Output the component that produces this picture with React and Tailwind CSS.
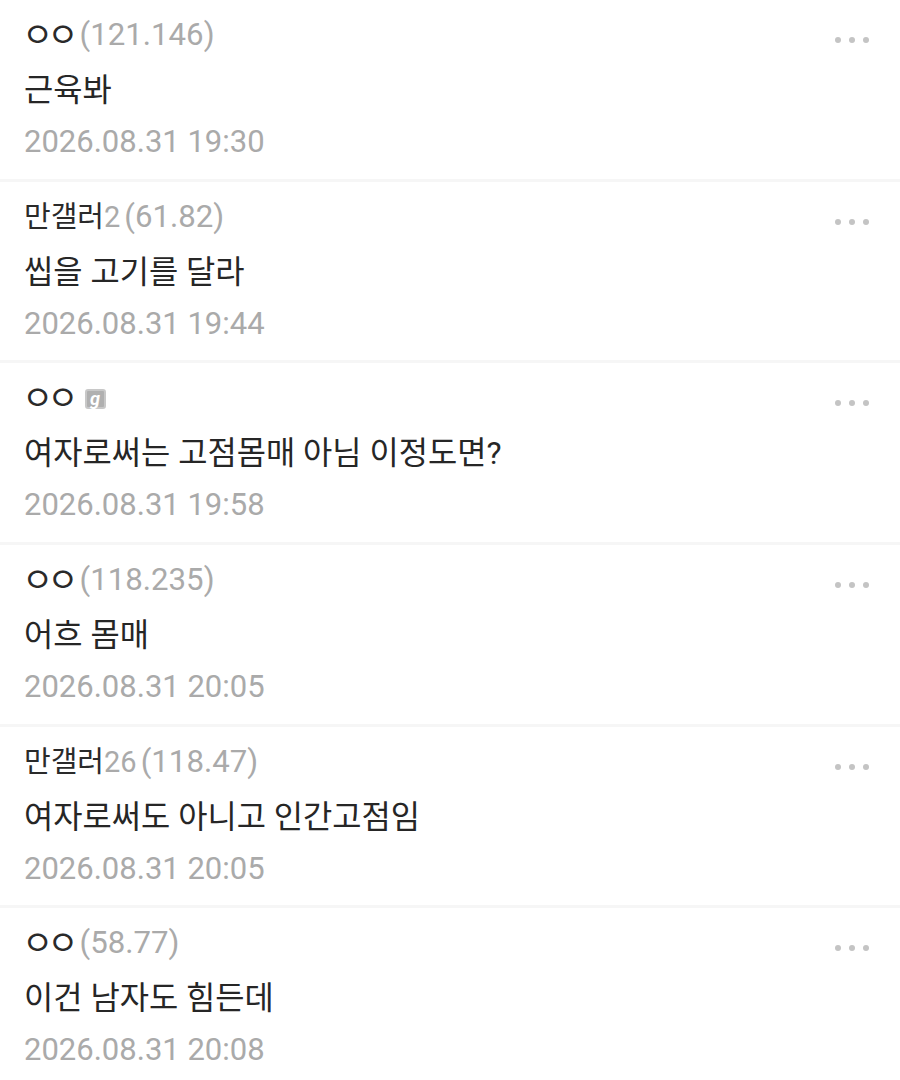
import React from 'react';

const comments = [
    { name: 'ㅇㅇ', ip: '(121.146)', text: '근육봐', date: '2026.08.31 19:30' },
    { name: '만갤러', count: '2', ip: '(61.82)', text: '씹을 고기를 달라', date: '2026.08.31 19:44' },
    { name: 'ㅇㅇ', badge: true, text: '여자로써는 고점몸매 아님 이정도면?', date: '2026.08.31 19:58' },
    { name: 'ㅇㅇ', ip: '(118.235)', text: '어흐 몸매', date: '2026.08.31 20:05' },
    { name: '만갤러', count: '26', ip: '(118.47)', text: '여자로써도 아니고 인간고점임', date: '2026.08.31 20:05' },
    { name: 'ㅇㅇ', ip: '(58.77)', text: '이건 남자도 힘든데', date: '2026.08.31 20:08' },
];

const sans = 'font-["Roboto","Noto_Sans_CJK_KR",sans-serif]';

function Dots() {
    return (
        <div className="flex gap-[8px] pt-[37px] pr-[31px]">
            <span className="w-[6px] h-[6px] rounded-full bg-[#c4c4c4]" />
            <span className="w-[6px] h-[6px] rounded-full bg-[#c4c4c4]" />
            <span className="w-[6px] h-[6px] rounded-full bg-[#c4c4c4]" />
        </div>
    );
}

function Badge() {
    return (
        <span className="ml-[9px] mt-[2px] w-[21px] h-[20px] rounded-[3px] bg-[#b0b0b0] border-2 border-[#c8c8c8] flex items-center justify-center text-white text-[18px] leading-none italic font-bold">
            g
        </span>
    );
}

function Name({ value }) {
    // the ㅇㅇ nick is drawn wider and tighter than the other names
    if (value === 'ㅇㅇ') {
        return <span className="text-[34px] tracking-[-6px] ml-[-2px] mr-[3px] text-[#2a2a2a]">{value}</span>;
    }
    return <span className="text-[29px] text-[#2a2a2a]">{value}</span>;
}

function Comment({ item, last }) {
    return (
        <div className={`flex justify-between pl-[24px] h-[181.7px] ${last ? '' : 'border-b-[3px] border-[#f6f6f6]'}`}>
            <div>
                <div className="flex items-center h-[40px] mt-[15px] text-[31.2px] leading-[40px] text-[#aaaaaa]">
                    <Name value={item.name} />
                    {item.count && <span className="text-[29px]">{item.count}</span>}
                    {item.ip && <span className="ml-[4px]">{item.ip}</span>}
                    {item.badge && <Badge />}
                </div>
                <div className="mt-[15px] h-[40px] text-[31.8px] leading-[40px] text-[#262626]">{item.text}</div>
                <div className="mt-[12px] h-[40px] text-[31px] leading-[40px] text-[#aaaaaa]">{item.date}</div>
            </div>
            <Dots />
        </div>
    );
}

export default function App() {
    return (
        <div className={`w-[900px] h-[1080px] overflow-hidden bg-white ${sans}`}>
            {comments.map((item, i) => (
                <Comment key={i} item={item} last={i === comments.length - 1} />
            ))}
        </div>
    );
}
